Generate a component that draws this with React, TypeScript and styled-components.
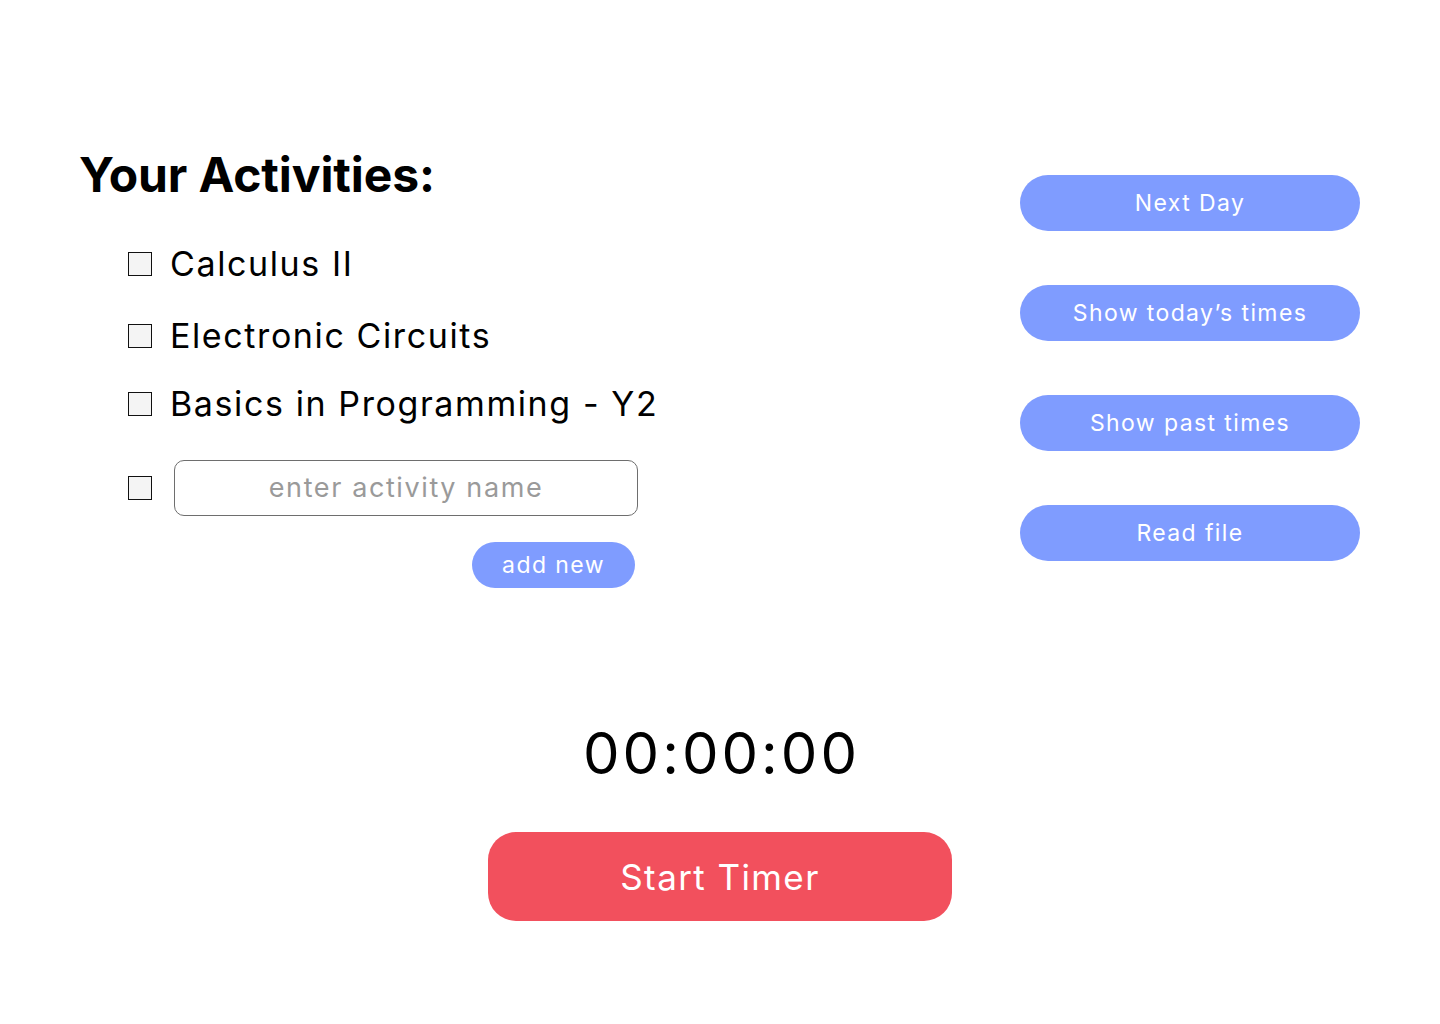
import React from "react";
import styled, { createGlobalStyle } from "styled-components";

const Global = createGlobalStyle`
  html, body { margin: 0; padding: 0; background: #ffffff; }
  body { font-family: "Inter", "Liberation Sans", sans-serif; color: #000; }
  * { box-sizing: border-box; }
`;

const Page = styled.div`
  width: 1440px;
  height: 1024px;
  display: flex;
  flex-direction: column;
  align-items: stretch;
`;

const Top = styled.div`
  display: grid;
  grid-template-columns: 1fr 340px;
  padding: 147px 80px 0 80px;
`;

const Left = styled.section`
  display: flex;
  flex-direction: column;
`;

const Heading = styled.h1`
  margin: 0 0 0 -1px;
  font-family: "Inter", "Liberation Sans", sans-serif;
  font-weight: 700;
  font-size: 48px;
  line-height: 56px;
  letter-spacing: -0.1px;
`;

const List = styled.ul`
  list-style: none;
  margin: 41px 0 0 48px;
  padding: 0;
  display: flex;
  flex-direction: column;
  gap: 30px;
`;

const Row = styled.li<{ $top?: number }>`
  display: flex;
  align-items: center;
  gap: 18px;
  height: 40px;
  margin-top: ${(p) => p.$top ?? 0}px;
`;

const Box = styled.span`
  width: 24px;
  height: 24px;
  border: 1.5px solid #111;
  background: #f4f4f4;
  flex: none;
`;

const Label = styled.span`
  font-size: 34px;
  line-height: 40px;
  letter-spacing: 1.6px;
  font-weight: 400;
`;

const InputRow = styled.li`
  display: flex;
  align-items: center;
  gap: 22px;
  margin-top: 6px;
`;

const NameInput = styled.input`
  width: 464px;
  height: 56px;
  border: 1px solid #6e6e6e;
  border-radius: 10px;
  background: #fff;
  font-family: "Inter", "Liberation Sans", sans-serif;
  font-size: 27px;
  letter-spacing: 1.6px;
  text-align: center;
  color: #333;
  outline: none;
  padding: 0 0 2px 0;
  &::placeholder { color: #9a9a9a; }
`;

const AddRow = styled.div`
  display: flex;
  justify-content: flex-end;
  width: 555px;
  margin-top: 26px;
`;

const Pill = styled.button<{ $w?: number; $h?: number; $fs?: number }>`
  width: ${(p) => p.$w ?? 340}px;
  height: ${(p) => p.$h ?? 56}px;
  border: none;
  border-radius: 999px;
  background: #7f9cff;
  color: #ffffff;
  font-family: "Inter", "Liberation Sans", sans-serif;
  font-size: ${(p) => p.$fs ?? 23}px;
  letter-spacing: 1.4px;
  font-weight: 400;
  display: flex;
  align-items: center;
  justify-content: center;
  cursor: pointer;
  padding: 0;
`;

const Right = styled.aside`
  display: flex;
  flex-direction: column;
  gap: 54px;
  padding-top: 28px;
`;

const Bottom = styled.section`
  display: flex;
  flex-direction: column;
  align-items: center;
  margin-top: 130px;
`;

const Clock = styled.div`
  font-size: 58px;
  line-height: 70px;
  letter-spacing: 3px;
  font-weight: 400;
  padding-left: 3px;
`;

const StartButton = styled.button`
  margin-top: 44px;
  width: 464px;
  height: 89px;
  border: none;
  border-radius: 28px;
  background: #f2505d;
  color: #fff;
  font-family: "Inter", "Liberation Sans", sans-serif;
  font-size: 35px;
  letter-spacing: 1.4px;
  cursor: pointer;
`;

const activities = ["Calculus II", "Electronic Circuits", "Basics in Programming - Y2"];
const actions = ["Next Day", "Show today\u2019s times", "Show past times", "Read file"];

export default function App() {
  return (
    <>
      <Global />
      <Page>
        <Top>
          <Left>
            <Heading>Your Activities:</Heading>
            <List>
              {activities.map((a, i) => (
                <Row key={a} $top={i === 1 ? 2 : i === 2 ? -2 : 0}>
                  <Box />
                  <Label>{a}</Label>
                </Row>
              ))}
              <InputRow>
                <Box />
                <NameInput placeholder="enter activity name" />
              </InputRow>
            </List>
            <AddRow>
              <Pill $w={163} $h={46} $fs={23}>add new</Pill>
            </AddRow>
          </Left>
          <Right>
            {actions.map((a) => (
              <Pill key={a}>{a}</Pill>
            ))}
          </Right>
        </Top>
        <Bottom>
          <Clock>00:00:00</Clock>
          <StartButton>Start Timer</StartButton>
        </Bottom>
      </Page>
    </>
  );
}
